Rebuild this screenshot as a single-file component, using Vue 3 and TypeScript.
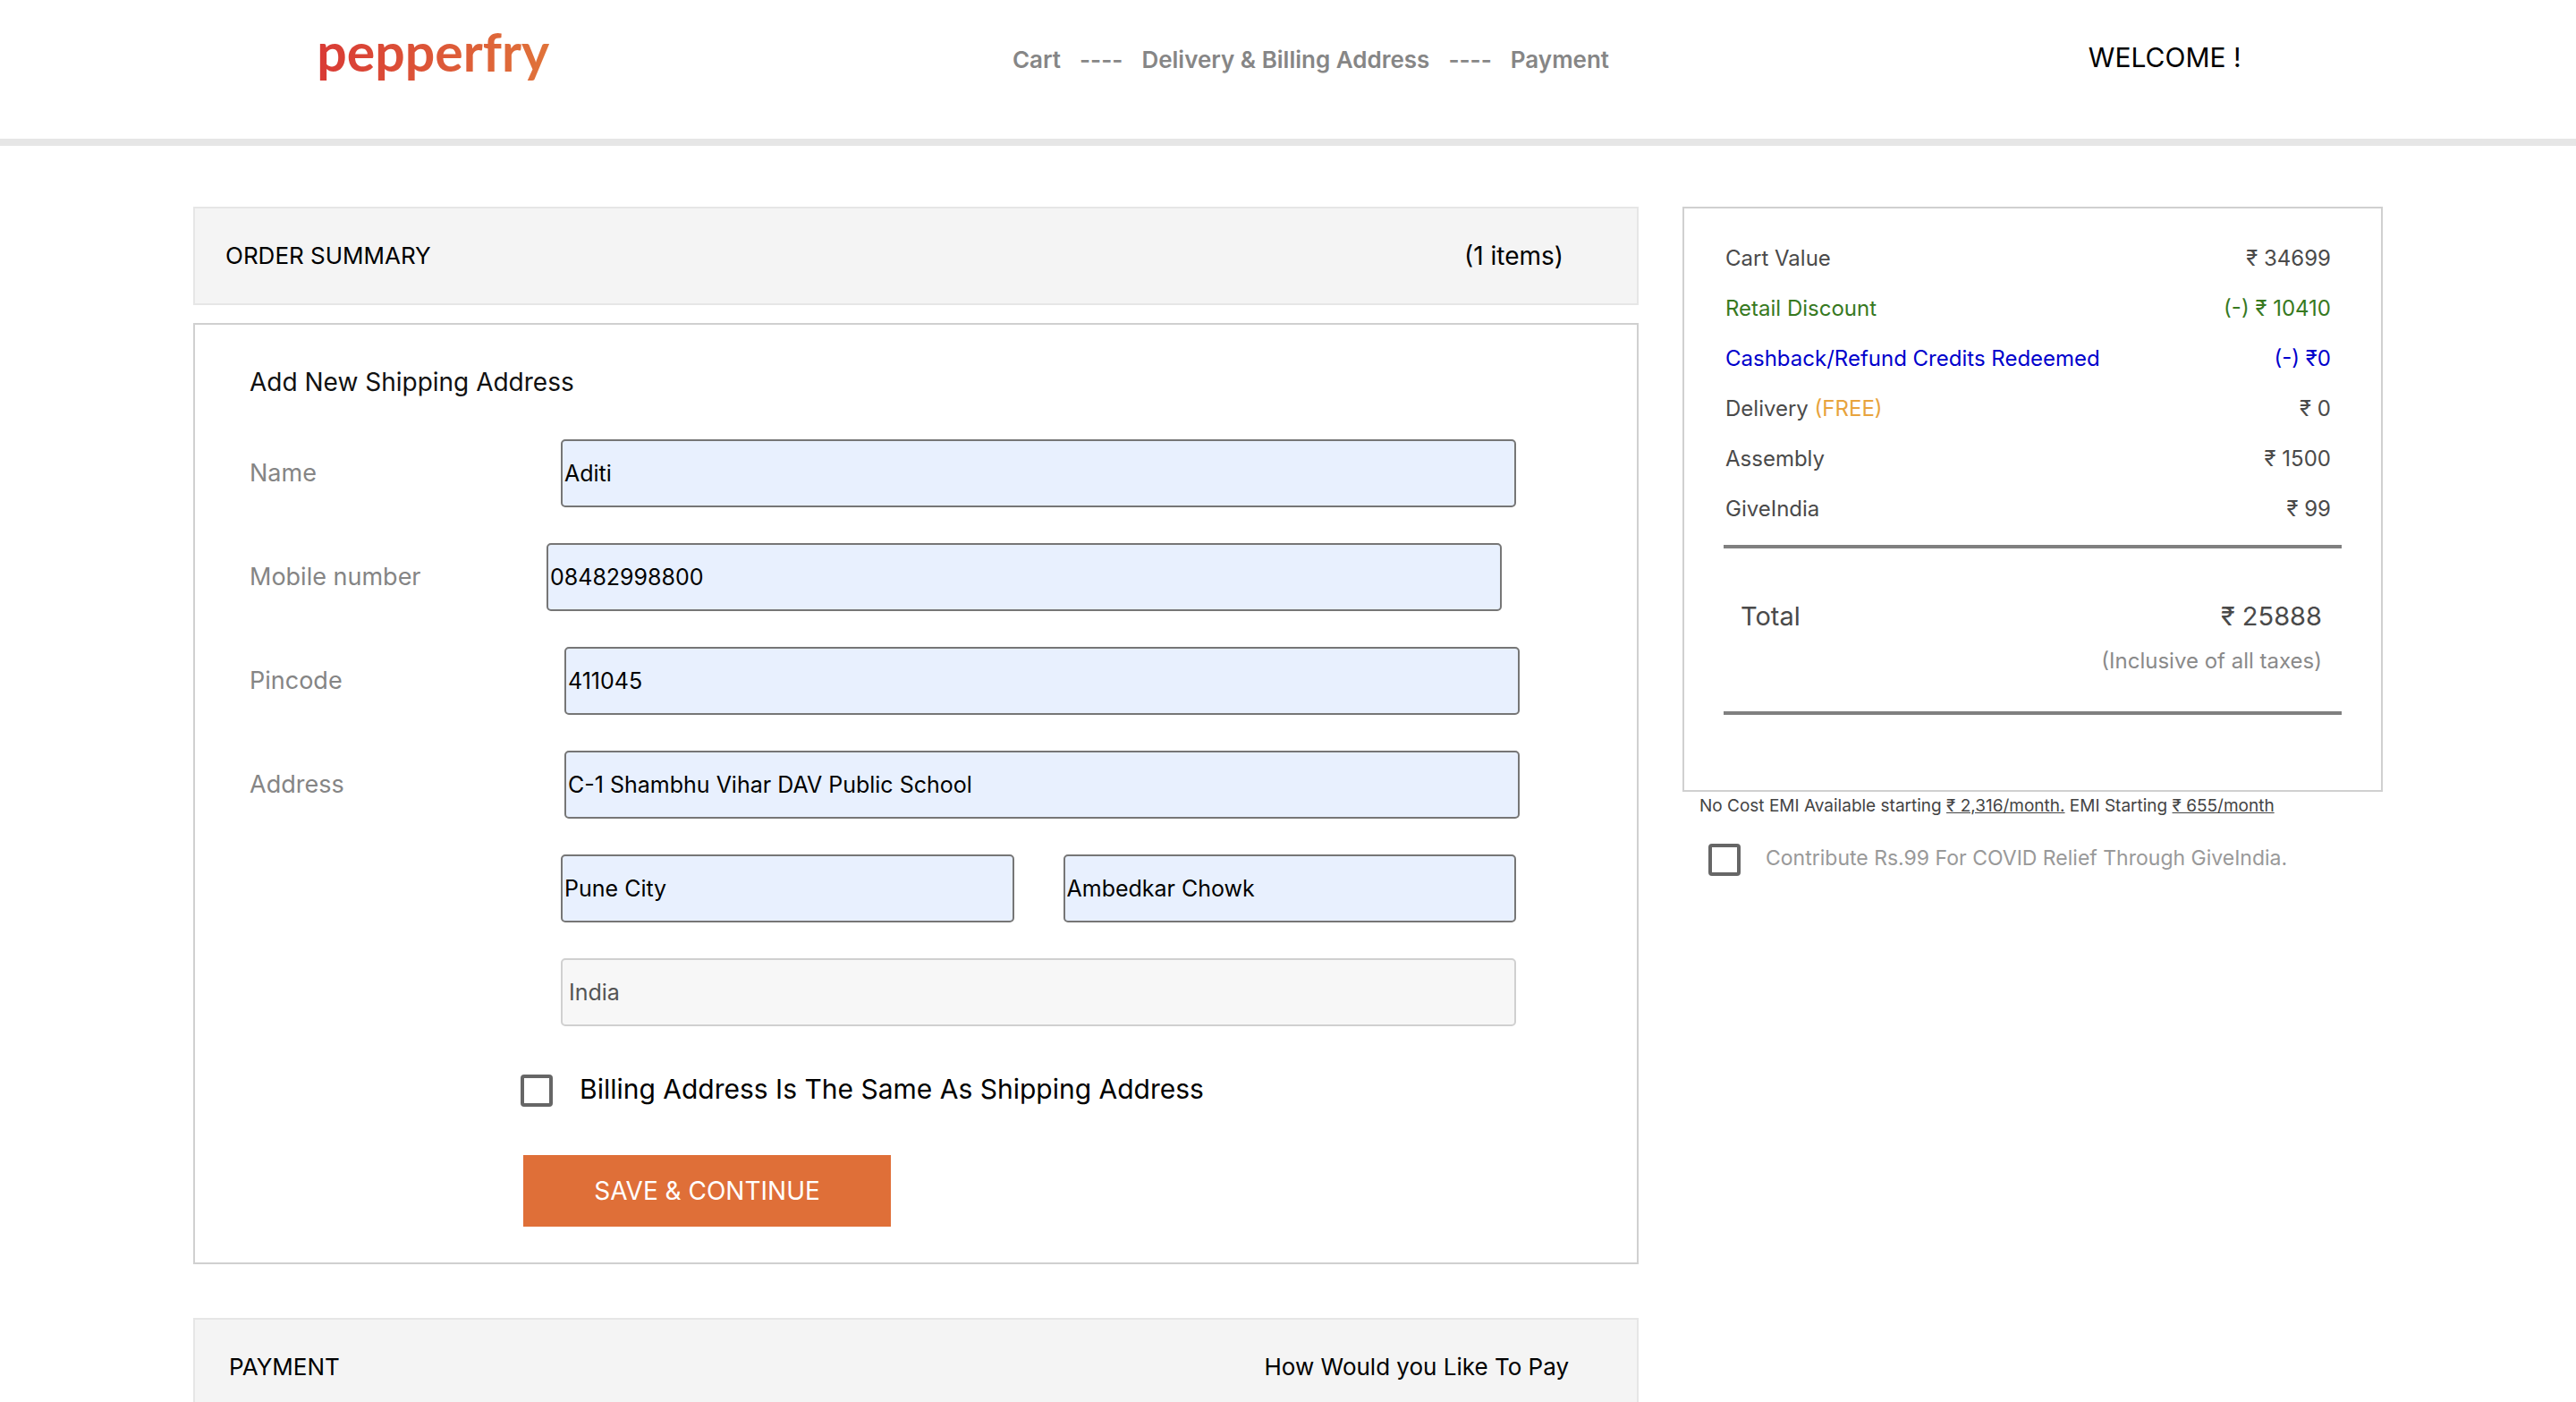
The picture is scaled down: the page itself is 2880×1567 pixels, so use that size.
<script setup lang="ts">
import { ref } from 'vue'

interface Field {
  id: string
  label: string
  value: string
  size: string
}

interface PriceRow {
  label: string
  note?: string
  amount: string
  tone: string
}

const steps: string[] = ['Cart', 'Delivery & Billing Address', 'Payment']

const fields = ref<Field[]>([
  { id: 'name', label: 'Name', value: 'Aditi', size: '' },
  { id: 'mobile', label: 'Mobile number', value: '08482998800', size: 'narrow' },
  { id: 'pincode', label: 'Pincode', value: '411045', size: 'wide' },
  { id: 'address', label: 'Address', value: 'C-1 Shambhu Vihar DAV Public School', size: 'wide' },
])

const city = ref('Pune City')
const locality = ref('Ambedkar Chowk')
const country = ref('India')
const sameAddress = ref(false)
const contribute = ref(false)

const prices: PriceRow[] = [
  { label: 'Cart Value', amount: '₹ 34699', tone: '' },
  { label: 'Retail Discount', amount: '(-) ₹ 10410', tone: 'discount' },
  { label: 'Cashback/Refund Credits Redeemed', amount: '(-) ₹0', tone: 'credit' },
  { label: 'Delivery', note: '(FREE)', amount: '₹ 0', tone: '' },
  { label: 'Assembly', amount: '₹ 1500', tone: '' },
  { label: 'GiveIndia', amount: '₹ 99', tone: '' },
]
</script>

<template>
  <div class="page">
    <header class="header">
      <a class="logo" href="#">pepperfry</a>
      <nav class="steps" aria-label="Checkout steps">
        <template v-for="(step, i) in steps" :key="step">
          <span v-if="i > 0">----</span>
          <span>{{ step }}</span>
        </template>
      </nav>
      <p class="welcome">WELCOME !</p>
    </header>

    <div class="layout">
      <main class="main">
        <section class="bar">
          <h2>ORDER SUMMARY</h2>
          <span class="count">(1 items)</span>
        </section>

        <form class="card" @submit.prevent>
          <h2 class="card-title">Add New Shipping Address</h2>
          <div v-for="f in fields" :key="f.id" class="field">
            <label :class="['label', f.size]" :for="f.id">{{ f.label }}</label>
            <input :id="f.id" v-model="f.value" class="input" type="text">
          </div>
          <div class="field">
            <span class="label"></span>
            <div class="pair">
              <input v-model="city" class="input" type="text" aria-label="City">
              <input v-model="locality" class="input" type="text" aria-label="Locality">
            </div>
          </div>
          <div class="field">
            <span class="label"></span>
            <input v-model="country" class="input" type="text" aria-label="Country" disabled>
          </div>
          <label class="check same">
            <input v-model="sameAddress" type="checkbox">
            <span>Billing Address Is The Same As Shipping Address</span>
          </label>
          <button class="save" type="submit">SAVE &amp; CONTINUE</button>
        </form>

        <section class="bar payment">
          <h2>PAYMENT</h2>
          <span>How Would you Like To Pay</span>
        </section>
      </main>

      <aside>
        <div class="totals">
          <table class="prices">
            <tbody>
              <tr v-for="row in prices" :key="row.label" :class="row.tone">
                <th scope="row">{{ row.label }} <span v-if="row.note" class="note">{{ row.note }}</span></th>
                <td>{{ row.amount }}</td>
              </tr>
            </tbody>
          </table>
          <div class="total">
            <div class="total-line">
              <span>Total</span>
              <span>₹ 25888</span>
            </div>
            <p class="taxes">(Inclusive of all taxes)</p>
          </div>
        </div>
        <p class="emi">
          No Cost EMI Available starting <a href="#">₹ 2,316/month.</a> EMI Starting <a href="#">₹ 655/month</a>
        </p>
        <label class="check covid">
          <input v-model="contribute" type="checkbox">
          <span>Contribute Rs.99 For COVID Relief Through GiveIndia.</span>
        </label>
      </aside>
    </div>
  </div>
</template>

<style>
body {
  background: #fff;
}
</style>

<style scoped>
.page {
  box-sizing: border-box;
  font-family: Inter, "Liberation Sans", sans-serif;
  color: #000;
}

.page *,
.page *::before {
  box-sizing: border-box;
}

h2,
p {
  margin: 0;
  font-weight: 400;
}

.header {
  display: flex;
  align-items: flex-start;
  justify-content: space-between;
  height: 163px;
  padding: 26px 13% 0 12.3%;
  border-bottom: 8px solid #e6e6e6;
}

.logo {
  font: 700 59px/64px Lato, sans-serif;
  color: transparent;
  background: linear-gradient(90deg, #d93a35, #e0733a);
  background-clip: text;
  text-decoration: none;
}

.steps {
  display: flex;
  gap: 21px;
  margin-right: 18px;
  padding-top: 25px;
  font-size: 26px;
  font-weight: 600;
  line-height: 32px;
  color: #868686;
}

.welcome {
  padding-top: 18px;
  font-size: 30px;
  line-height: 40px;
}

.layout {
  display: grid;
  grid-template-columns: 1616fr 783fr;
  gap: 49px;
  align-items: start;
  padding: 68px 7.5% 0;
}

.bar {
  display: flex;
  align-items: center;
  justify-content: space-between;
  height: 110px;
  padding: 0 82px 0 34px;
  border: 2px solid #e6e6e6;
  background: #f4f4f4;
  font-size: 26px;
  line-height: 36px;
}

.bar h2 {
  font-size: 26px;
}

.bar .count {
  font-size: 28px;
}

.payment {
  margin-top: 60px;
  padding: 0 76px 0 38px;
}

.card {
  margin-top: 20px;
  padding: 44px 132px 40px 61px;
  border: 2px solid #d0d0d0;
}

.card-title {
  margin-bottom: 44px;
  font-size: 28px;
  line-height: 40px;
  color: #111;
}

.field {
  display: flex;
  align-items: center;
  margin-bottom: 40px;
}

.label {
  flex: none;
  width: 348px;
  font-size: 27px;
  line-height: 36px;
  color: #858585;
}

.label.narrow {
  width: 332px;
}

.label.wide {
  width: 352px;
}

.input {
  flex: none;
  width: 100%;
  max-width: 1068px;
  height: 76px;
  padding: 0 2px;
  border: 2px solid #767676;
  border-radius: 5px;
  background: #e8f0fe;
  font: 400 25px/36px Inter, sans-serif;
  color: #000;
}

.input:disabled {
  padding: 0 7px;
  border-color: #d0d0d0;
  background: #f7f7f7;
  color: #545454;
}

.pair {
  display: grid;
  flex: 1;
  grid-template-columns: 1fr 1fr;
  gap: 55px;
  max-width: 1068px;
}

.check {
  display: flex;
  align-items: center;
}

.check input {
  flex: none;
  width: 36px;
  height: 36px;
  margin: 0;
  border: 4px solid #666;
  border-radius: 4px;
  background: #fff;
  appearance: none;
}

.check input:checked {
  background: #666;
}

.check span {
  padding-bottom: 4px;
}

.same {
  gap: 30px;
  margin: 52px 0 52px 303px;
  font-size: 30px;
  line-height: 36px;
}

.save {
  display: block;
  width: 411px;
  height: 80px;
  margin-left: 306px;
  border: 0;
  background: #df6f38;
  font: 400 28px/36px Inter, sans-serif;
  color: #fff;
}

.totals {
  padding: 28px 44px 84px;
  border: 2px solid #d0d0d0;
}

.prices {
  width: 100%;
  border-collapse: collapse;
  font-size: 24px;
  line-height: 32px;
  color: #4a4a4a;
}

.prices th,
.prices td {
  height: 56px;
  padding: 0 12px 0 2px;
  font-weight: 400;
  text-align: left;
}

.prices td {
  text-align: right;
}

.prices .discount {
  color: #37791f;
}

.prices .credit {
  color: #00c;
}

.note {
  color: #e8a33d;
}

.total {
  margin-top: 12px;
  padding: 50px 22px 32px 19px;
  border-top: 4px solid #808080;
  border-bottom: 4px solid #808080;
}

.total-line {
  display: flex;
  justify-content: space-between;
  font-size: 29px;
  line-height: 52px;
  color: #4a4a4a;
}

.taxes {
  font-size: 24px;
  line-height: 48px;
  text-align: right;
  color: #8a8a8a;
}

.emi {
  padding-left: 19px;
  font-size: 19px;
  line-height: 32px;
  color: #444;
}

.emi a {
  color: inherit;
}

.covid {
  gap: 28px;
  margin: 26px 0 0 29px;
  font-size: 23px;
  line-height: 32px;
  color: #999;
}
</style>
